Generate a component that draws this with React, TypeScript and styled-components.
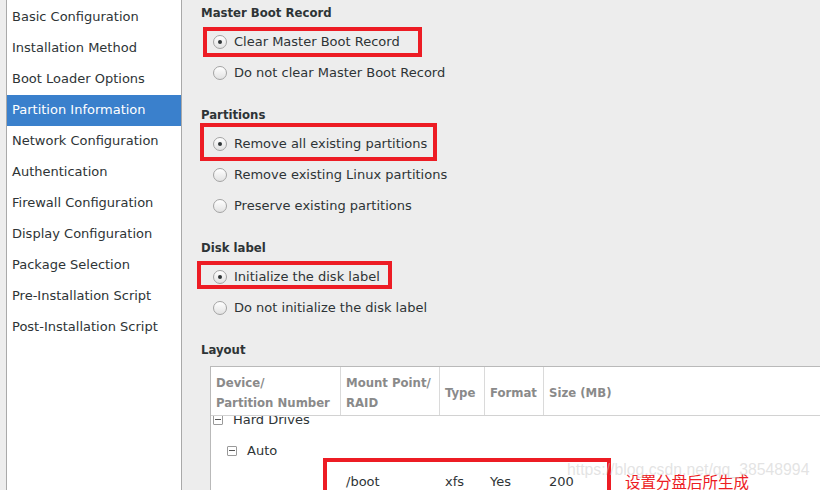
import * as React from 'react';
import styled, { createGlobalStyle } from 'styled-components';

const GlobalStyle = createGlobalStyle`
  html, body {
    margin: 0;
    padding: 0;
    background: #ededed;
  }
  body {
    font-family: "DejaVu Sans", "Noto Sans", sans-serif;
    font-size: 13px;
    color: #2e3436;
  }
`;

const steps = [
  'Basic Configuration',
  'Installation Method',
  'Boot Loader Options',
  'Partition Information',
  'Network Configuration',
  'Authentication',
  'Firewall Configuration',
  'Display Configuration',
  'Package Selection',
  'Pre-Installation Script',
  'Post-Installation Script',
];

type Box = { x: number; y: number; w: number; h: number };

type Group = {
  title: string;
  options: { label: string; checked?: boolean; mark?: Box }[];
};

const groups: Group[] = [
  {
    title: 'Master Boot Record',
    options: [
      { label: 'Clear Master Boot Record', checked: true, mark: { x: 2, y: 1, w: 219, h: 30 } },
      { label: 'Do not clear Master Boot Record' },
    ],
  },
  {
    title: 'Partitions',
    options: [
      { label: 'Remove all existing partitions', checked: true, mark: { x: -1, y: -5, w: 237, h: 38 } },
      { label: 'Remove existing Linux partitions' },
      { label: 'Preserve existing partitions' },
    ],
  },
  {
    title: 'Disk label',
    options: [
      { label: 'Initialize the disk label', checked: true, mark: { x: -4, y: 0, w: 195, h: 28 } },
      { label: 'Do not initialize the disk label' },
    ],
  },
];

function App() {
  return (
    <Page>
      <GlobalStyle />
      <Sidebar>
        {steps.map((step) => (
          <Step key={step} $active={step === 'Partition Information'}>
            {step}
          </Step>
        ))}
      </Sidebar>
      <Main>
        {groups.map((group) => (
          <Section key={group.title}>
            <Heading>{group.title}</Heading>
            {group.options.map((opt) => (
              <Option key={opt.label}>
                <Radio $checked={!!opt.checked} />
                {opt.label}
                {opt.mark && (
                  <Mark $x={opt.mark.x} $y={opt.mark.y} $w={opt.mark.w} $h={opt.mark.h} />
                )}
              </Option>
            ))}
          </Section>
        ))}
        <Section>
          <Heading>Layout</Heading>
          <Table>
            <HeadRow>
              <HeadCell>
                Device/
                <br />
                Partition Number
              </HeadCell>
              <HeadCell>
                Mount Point/
                <br />
                RAID
              </HeadCell>
              <HeadCell>Type</HeadCell>
              <HeadCell>Format</HeadCell>
              <HeadCell>Size (MB)</HeadCell>
            </HeadRow>
            <Body>
              <Scrolled>
                <TreeRow $level={0}>
                  <Expander />
                  Hard Drives
                </TreeRow>
                <TreeRow $level={1}>
                  <Expander />
                  Auto
                </TreeRow>
                <DataRow>
                  <Cell />
                  <Cell>/boot</Cell>
                  <Cell>xfs</Cell>
                  <Cell>Yes</Cell>
                  <Cell>200</Cell>
                  <Mark $x={112} $y={-8} $w={288} $h={44} />
                  <Note>设置分盘后所生成</Note>
                </DataRow>
              </Scrolled>
            </Body>
          </Table>
        </Section>
      </Main>
      <Watermark>https://blog.csdn.net/qq_38548994</Watermark>
    </Page>
  );
}

const Page = styled.div`
  position: relative;
  display: flex;
  height: 490px;
  width: 820px;
  overflow: hidden;
`;

const Sidebar = styled.ul`
  list-style: none;
  margin: 0 0 0 6px;
  padding: 2px 0 0;
  width: 176px;
  flex: none;
  box-sizing: border-box;
  background: #ffffff;
  border-left: 1px solid #a9a9a9;
  border-right: 1px solid #a9a9a9;
`;

const Step = styled.li<{ $active: boolean }>`
  height: 31px;
  line-height: 30px;
  padding-left: 5px;
  white-space: nowrap;
  background: ${(p) => (p.$active ? '#3a80cc' : 'transparent')};
  color: ${(p) => (p.$active ? '#ffffff' : '#2e3436')};
`;

const Main = styled.main`
  flex: 1;
  min-width: 0;
  display: flex;
  flex-direction: column;
  gap: 14px;
  padding-left: 19px;
  overflow: hidden;
`;

const Section = styled.section`
  display: flex;
  flex-direction: column;
`;

const Heading = styled.h3`
  margin: 0;
  height: 26px;
  line-height: 25px;
  font-family: "DejaVu Sans Condensed", "DejaVu Sans", sans-serif;
  font-size: 13px;
  font-weight: bold;
  color: #2e3436;
`;

const Option = styled.label`
  position: relative;
  display: flex;
  align-items: center;
  gap: 7px;
  height: 31px;
  padding-left: 12px;
  white-space: nowrap;
`;

const Radio = styled.span<{ $checked: boolean }>`
  position: relative;
  width: 14px;
  height: 14px;
  box-sizing: border-box;
  border-radius: 50%;
  border: 1px solid #a4a4a4;
  background: linear-gradient(#ffffff, #e2e2e2);

  &::after {
    content: '';
    display: ${(p) => (p.$checked ? 'block' : 'none')};
    position: absolute;
    left: 4px;
    top: 4px;
    width: 4px;
    height: 4px;
    border-radius: 50%;
    background: #2e3436;
  }
`;

const Mark = styled.span<{ $x: number; $y: number; $w: number; $h: number }>`
  position: absolute;
  left: ${(p) => p.$x}px;
  top: ${(p) => p.$y}px;
  width: ${(p) => p.$w}px;
  height: ${(p) => p.$h}px;
  box-sizing: border-box;
  border: 4px solid #ed1c24;
  pointer-events: none;
`;

const Table = styled.div`
  margin: 3px 0 0 9px;
  width: 760px;
  background: #ffffff;
  border-top: 1px solid #b9b9b9;
  border-left: 1px solid #b9b9b9;
`;

const columns = '130px 99px 45px 59px 1fr';

const HeadRow = styled.div`
  display: grid;
  grid-template-columns: ${columns};
  height: 49px;
  box-sizing: border-box;
  border-bottom: 1px solid #d2d2d2;
`;

const HeadCell = styled.div`
  display: flex;
  align-items: center;
  padding: 4px 0 0 5px;
  line-height: 20px;
  font-family: "DejaVu Sans Condensed", "DejaVu Sans", sans-serif;
  font-weight: bold;
  color: #8a8a8a;
  white-space: nowrap;
  border-right: 1px solid #dadada;

  &:last-child {
    border-right: none;
  }
`;

const Body = styled.div`
  height: 120px;
  overflow: hidden;
`;

const Scrolled = styled.div`
  margin-top: -12px;
`;

const TreeRow = styled.div<{ $level: number }>`
  display: flex;
  align-items: center;
  gap: 10px;
  height: 31px;
  padding-left: ${(p) => 2 + p.$level * 14}px;
  color: #2e3436;
`;

const Expander = styled.span`
  position: relative;
  width: 10px;
  height: 10px;
  box-sizing: border-box;
  border: 1px solid #9a9a9a;
  border-radius: 1px;
  background: #ffffff;

  &::after {
    content: '';
    position: absolute;
    left: 1px;
    right: 1px;
    top: 3.5px;
    height: 1px;
    background: #555;
  }
`;

const DataRow = styled.div`
  position: relative;
  display: grid;
  grid-template-columns: ${columns};
  height: 31px;
  align-items: center;
`;

const Cell = styled.div`
  padding-left: 5px;
  white-space: nowrap;
`;

const Note = styled.span`
  position: absolute;
  left: 414px;
  top: 5px;
  font-family: "Noto Sans CJK SC", sans-serif;
  font-size: 15.5px;
  line-height: 20px;
  color: #ed1c24;
  white-space: nowrap;
`;

const Watermark = styled.div`
  position: absolute;
  left: 567px;
  top: 460px;
  font-family: "Liberation Sans", Arial, sans-serif;
  font-size: 15.8px;
  line-height: 20px;
  color: rgba(200, 200, 200, 0.5);
  white-space: nowrap;
  pointer-events: none;
`;

export default App;
